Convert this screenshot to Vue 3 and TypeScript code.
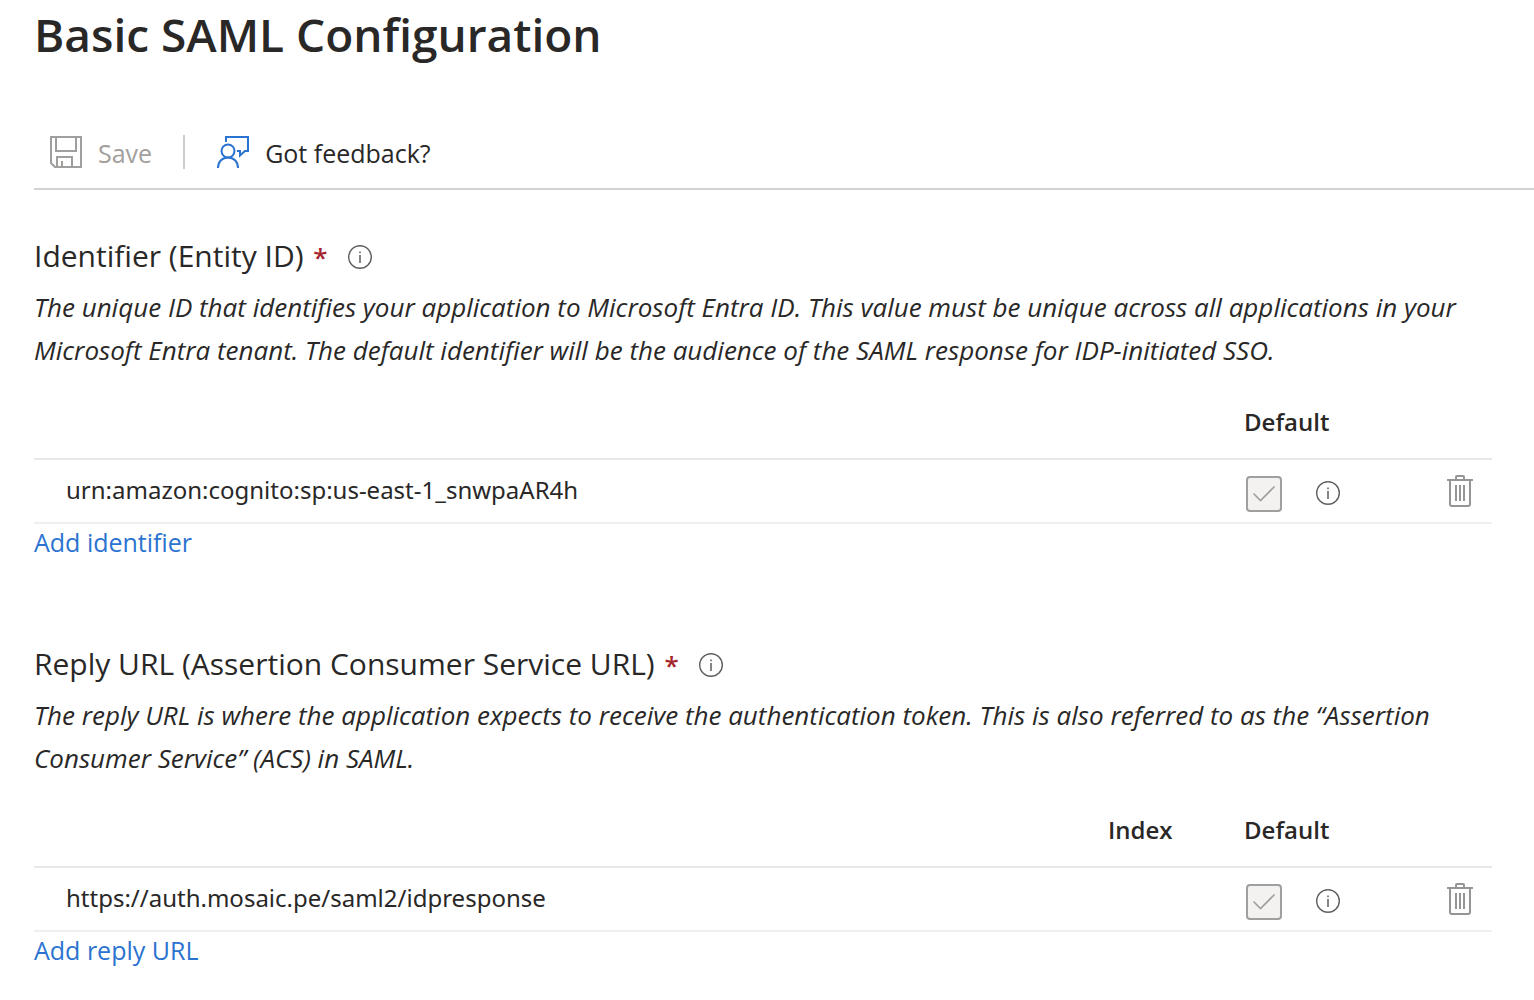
<script setup lang="ts">
interface Entry {
  value: string
  isDefault: boolean
}

interface Section {
  id: string
  title: string
  description: string
  hasIndex: boolean
  entries: Entry[]
  addLabel: string
}

const sections: Section[] = [
  {
    id: 'identifier',
    title: 'Identifier (Entity ID)',
    description:
      'The unique ID that identifies your application to Microsoft Entra ID. This value must be unique across all applications in your Microsoft Entra tenant. The default identifier will be the audience of the SAML response for IDP-initiated SSO.',
    hasIndex: false,
    entries: [{ value: 'urn:amazon:cognito:sp:us-east-1_snwpaAR4h', isDefault: true }],
    addLabel: 'Add identifier',
  },
  {
    id: 'reply-url',
    title: 'Reply URL (Assertion Consumer Service URL)',
    description:
      'The reply URL is where the application expects to receive the authentication token. This is also referred to as the “Assertion Consumer Service” (ACS) in SAML.',
    hasIndex: true,
    entries: [{ value: 'https://auth.mosaic.pe/saml2/idpresponse', isDefault: true }],
    addLabel: 'Add reply URL',
  },
]
</script>

<template>
  <main class="panel">
    <h1 class="title">Basic SAML Configuration</h1>

    <div class="commands">
      <button type="button" class="command" disabled>
        <svg class="command-icon" viewBox="0 0 32 32" fill="none" stroke="currentColor" stroke-width="2" aria-hidden="true">
          <path d="M1 1H31V31H5L1 27Z" />
          <path d="M6 1V15H26V1" />
          <path d="M7 31V21H22V31" />
          <path d="M12 25V31" />
        </svg>
        <span class="command-label">Save</span>
      </button>
      <span class="divider"></span>
      <button type="button" class="command">
        <svg class="command-icon feedback" viewBox="0 0 32 32" fill="none" stroke="currentColor" stroke-width="2" aria-hidden="true">
          <path d="M9 6V1H31V15H28L23 19.500V15H20" />
          <circle cx="11" cy="15" r="6.500" />
          <path d="M1 32C1 25.500 5.500 21.500 11 21.500S21 25.500 21 32" />
        </svg>
        <span class="command-label">Got feedback?</span>
      </button>
    </div>

    <section v-for="section in sections" :key="section.id" class="section">
      <div class="section-head">
        <h2 class="section-title">{{ section.title }} <span class="required">*</span></h2>
        <button type="button" class="icon-button info" :aria-label="'About ' + section.title">
          <svg viewBox="0 0 24 24" fill="none" stroke="currentColor" aria-hidden="true">
            <circle cx="12" cy="12" r="11.300" stroke-width="1.400" />
            <path d="M12 10V18M12 6.500V8.300" stroke-width="1.500" />
          </svg>
        </button>
      </div>
      <p class="description">{{ section.description }}</p>

      <table class="entries">
        <thead>
          <tr>
            <th class="value-col"></th>
            <th v-if="section.hasIndex" class="index-col" scope="col">Index</th>
            <th class="default-col" scope="col">Default</th>
            <th class="delete-col"></th>
          </tr>
        </thead>
        <tbody>
          <tr v-for="entry in section.entries" :key="entry.value">
            <td class="value-col">{{ entry.value }}</td>
            <td v-if="section.hasIndex" class="index-col"></td>
            <td class="default-col">
              <div class="default-cell">
                <label class="check">
                  <input type="checkbox" :checked="entry.isDefault" disabled :aria-label="'Default: ' + entry.value" />
                  <svg viewBox="0 0 36 36" fill="none" stroke="currentColor" stroke-width="1.600" aria-hidden="true">
                    <path d="M7.500 17.500L14.500 24.500L28.500 10.500" />
                  </svg>
                </label>
                <button type="button" class="icon-button info" aria-label="About the default value">
                  <svg viewBox="0 0 24 24" fill="none" stroke="currentColor" aria-hidden="true">
                    <circle cx="12" cy="12" r="11.300" stroke-width="1.400" />
                    <path d="M12 10V18M12 6.500V8.300" stroke-width="1.500" />
                  </svg>
                </button>
              </div>
            </td>
            <td class="delete-col">
              <button type="button" class="icon-button delete" :aria-label="'Delete ' + entry.value">
                <svg viewBox="0 0 26 32" fill="none" stroke="currentColor" stroke-width="2" aria-hidden="true">
                  <path d="M0 5H26" />
                  <path d="M9 5V2Q9 1 10 1H16Q17 1 17 2V5" />
                  <path d="M3 5V29Q3 31 5 31H21Q23 31 23 29V5" />
                  <path d="M9 10V26M13 10V26M17 10V26" />
                </svg>
              </button>
            </td>
          </tr>
        </tbody>
      </table>
      <a class="add-link" href="#">{{ section.addLabel }}</a>
    </section>
  </main>
</template>

<style>
body {
  background: #ffffff;
}
</style>

<style scoped>
.panel {
  padding-left: 34px;
  font-family: 'Open Sans', 'Noto Sans', sans-serif;
  font-size: 25px;
  color: #292827;
}

.title {
  margin: 0;
  font-size: 46px;
  font-weight: 600;
  line-height: 68px;
}

.commands {
  display: flex;
  align-items: center;
  height: 72px;
  margin-top: 48px;
  padding-left: 16px;
  border-bottom: 2px solid #d2d2d2;
}

.command {
  display: flex;
  align-items: center;
  gap: 16px;
  padding: 0;
  border: 0;
  background: none;
  font: inherit;
  line-height: 36px;
  color: inherit;
}

.command:disabled {
  color: #a19f9d;
}

.command-label {
  padding-top: 2px;
}

.command-icon {
  width: 32px;
  height: 32px;
}

.feedback {
  color: #2b73d0;
}

.divider {
  width: 2px;
  height: 34px;
  margin: 0 32px 0 31px;
  background: #cccccc;
}

.section {
  margin: 44px 42px 80px 0;
}

.section + .section {
  margin-top: 80px;
}

.section-head {
  display: flex;
  align-items: center;
  gap: 20px;
  height: 40px;
}

.section-title {
  margin: 0;
  padding-top: 4px;
  font-size: 30px;
  font-weight: 400;
  line-height: 44px;
}

.required {
  padding-left: 2px;
  font-size: 26px;
  font-weight: 600;
  color: #a4262c;
}

.icon-button {
  display: block;
  padding: 0;
  border: 0;
  background: none;
}

.icon-button svg {
  display: block;
  width: 100%;
  height: 100%;
}

.info {
  width: 24px;
  height: 24px;
  color: #605e5c;
}

.section-head .info {
  margin-top: 6px;
}

.description {
  margin: 12px 0 14px;
  font-size: 26px;
  font-style: italic;
  line-height: 43px;
}

.entries {
  width: 100%;
  border-collapse: separate;
  border-spacing: 0;
  table-layout: fixed;
  font-size: 24px;
}

.entries th,
.entries td {
  box-sizing: border-box;
  padding: 0;
  text-align: left;
  line-height: 36px;
}

.entries th {
  height: 74px;
  border-bottom: 2px solid #e8e8e8;
  font-weight: 600;
}

.entries td {
  height: 64px;
  border-bottom: 2px solid #f0f0f0;
}

.entries td.value-col {
  padding: 0 0 2px 32px;
  font-family: 'Noto Sans', 'Open Sans', sans-serif;
}

.index-col {
  width: 136px;
}

.default-col {
  width: 203px;
}

.delete-col {
  width: 45px;
}

.default-cell {
  display: flex;
  align-items: center;
  gap: 34px;
  padding: 6px 0 0 2px;
}

.default-cell .info {
  margin-bottom: 2px;
}

.check {
  display: grid;
  width: 36px;
  height: 36px;
}

.check input {
  grid-area: 1 / 1;
  width: 36px;
  height: 36px;
  margin: 0;
  appearance: none;
  border: 2px solid #a19f9d;
  border-radius: 4px;
  background: #f3f2f1;
}

.check svg {
  grid-area: 1 / 1;
  z-index: 1;
  color: #a19f9d;
}

.delete {
  width: 26px;
  height: 32px;
  color: #979593;
}

.add-link {
  display: block;
  width: fit-content;
  padding-bottom: 2px;
  line-height: 36px;
  color: #2b73d0;
  text-decoration: none;
}
</style>
